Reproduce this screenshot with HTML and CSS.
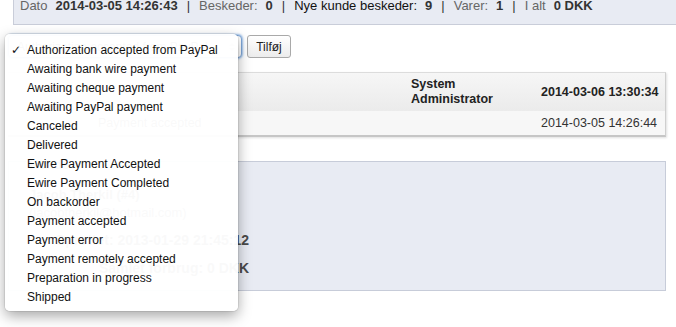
FILE: index.html
```html
<!DOCTYPE html>
<html lang="da">
<head>
<meta charset="utf-8">
<title>Ordre</title>
<link rel="stylesheet" href="styles.css">
</head>
<body>
<div class="topbar">
  <span class="lbl">Dato</span><b>2014-03-05 14:26:43</b><span class="sep">|</span>
  <span class="lbl">Beskeder:</span><b>0</b><span class="sep">|</span>
  <span class="lbl dark">Nye kunde beskeder:</span><b>9</b><span class="sep">|</span>
  <span class="lbl">Varer:</span><b>1</b><span class="sep">|</span>
  <span class="lbl">I alt</span><b>0 DKK</b>
</div>

<div class="toolbar">
  <div class="select"><span class="sel-text">Authorization accepted from PayPal</span><span class="arrows"><i class="up"></i><i class="down"></i></span></div>
  <button class="btn" type="button">Tilføj</button>
</div>

<div class="history">
  <div class="hrow head">
    <div class="cell"></div>
    <div class="cell">System<br>Administrator</div>
    <div class="cell">2014-03-06 13:30:34</div>
  </div>
  <div class="hrow body">
    <div class="cell status">Payment accepted</div>
    <div class="cell"></div>
    <div class="cell">2014-03-05 14:26:44</div>
  </div>
</div>

<div class="panel">
  <div class="p-col">
    <div class="p-title">Kunde</div>
    <div class="p-name">Jacob Therkil (#4)</div>
    <div class="p-mail">(jacobtherkil@hotmail.com)</div>
    <div class="p-strong">Oprettet: 2013-01-29 21:45:12</div>
    <div class="p-strong">Samlet forbrug: 0 DKK</div>
  </div>
</div>

<ul class="menu">
  <li class="checked">Authorization accepted from PayPal</li>
  <li>Awaiting bank wire payment</li>
  <li>Awaiting cheque payment</li>
  <li>Awaiting PayPal payment</li>
  <li>Canceled</li>
  <li>Delivered</li>
  <li>Ewire Payment Accepted</li>
  <li>Ewire Payment Completed</li>
  <li>On backorder</li>
  <li>Payment accepted</li>
  <li>Payment error</li>
  <li>Payment remotely accepted</li>
  <li>Preparation in progress</li>
  <li>Shipped</li>
</ul>
</body>
</html>
```
FILE: styles.css
```css
* { box-sizing: border-box; }
body {
  margin: 0;
  font-family: "Liberation Sans", Arial, sans-serif;
  font-size: 12px;
  color: #333;
  background: #fff;
  position: relative;
  width: 676px;
  height: 327px;
  overflow: hidden;
}
.topbar {
  margin-left: 13px;
  height: 25px;
  background: #e8ebf3;
  border-left: 1px solid #c9cdd9;
  border-bottom: 1px solid #c9cdd9;
  padding: 0 0 0 6px;
  line-height: 12px;
  font-size: 13px;
  white-space: nowrap;
  display: flex;
  align-items: flex-start;
}
.topbar .lbl { color: #666; margin-right: 8px; }
.topbar .lbl.dark { color: #111; }
.topbar b { color: #333; }
.topbar .sep { color: #333; margin: 0 9px; }

.toolbar {
  display: flex;
  gap: 5px;
  margin: 10px 0 0 8px;
  height: 23px;
}
.select {
  width: 234px;
  height: 23px;
  border: 1px solid #7fa7d8;
  border-radius: 4px;
  box-shadow: 0 0 2px 1px rgba(90,150,220,0.6);
  background: #fff;
  display: flex;
  align-items: center;
  justify-content: space-between;
  padding: 0 6px 0 8px;
  font-size: 12px;
}
.arrows { display: flex; flex-direction: column; gap: 2px; }
.arrows i { display: block; width: 0; height: 0; border-left: 3px solid transparent; border-right: 3px solid transparent; }
.arrows .up { border-bottom: 3px solid #bbb; }
.arrows .down { border-top: 3px solid #bbb; }
.btn {
  width: 44px;
  height: 23px;
  padding: 0;
  font-family: inherit;
  font-size: 12px;
  color: #222;
  border: 1px solid #a9a9a9;
  border-radius: 3px;
  background: linear-gradient(#ffffff, #ececec);
}

.history {
  margin: 14px 10px 0 8px;
  border-top: 1px solid #dcdcdc;
  border-right: 1px solid #cfcfcf;
  border-bottom: 2px solid #c6c6c6;
  box-shadow: 1px 1px 2px rgba(0,0,0,0.12);
}
.hrow {
  display: grid;
  grid-template-columns: 1fr 130px 131px;
  align-items: center;
}
.hrow.head {
  height: 38px;
  background: linear-gradient(#f6f6f6, #ebebeb);
  font-weight: bold;
  font-size: 12.5px;
  line-height: 15px;
  color: #222;
}
.hrow.body {
  height: 24px;
  background: #f7f7f7;
  font-size: 12.5px;
  color: #333;
}
.cell { padding-left: 7px; }
.status { padding-left: 90px; color: #444; }

.panel {
  margin: 24px 10px 0 8px;
  height: 130px;
  background: #e8ebf3;
  border: 1px solid #c7ccd9;
  color: #555;
}
.p-col {
  width: 240px;
  padding-left: 20px;
}
.p-title { margin-top: -4px; height: 29px; line-height: 14px; font-weight: bold; font-size: 13px; }
.p-name { font-weight: bold; font-size: 13px; height: 18px; }
.p-mail { font-size: 13px; height: 27px; }
.p-strong {
  font-weight: bold;
  font-size: 14px;
  color: #4a4a4a;
  height: 28px;
  line-height: 16px;
  text-align: right;
  white-space: nowrap;
}

.menu {
  position: absolute;
  left: 5px;
  top: 34px;
  width: 233px;
  margin: 0;
  padding: 7px 0 4px;
  list-style: none;
  background: rgba(255,255,255,0.97);
  border-radius: 5px;
  box-shadow: 0 0 0 1px rgba(0,0,0,0.07), 0 5px 14px rgba(0,0,0,0.35);
  font-size: 12px;
  color: #111;
}
.menu li {
  height: 19px;
  line-height: 19px;
  padding-left: 22px;
  position: relative;
  white-space: nowrap;
}
.menu li.checked::before {
  content: "\2713";
  position: absolute;
  left: 6px;
  top: 0;
  font-family: "DejaVu Sans", sans-serif;
  font-size: 12px;
  font-weight: bold;
}
```
